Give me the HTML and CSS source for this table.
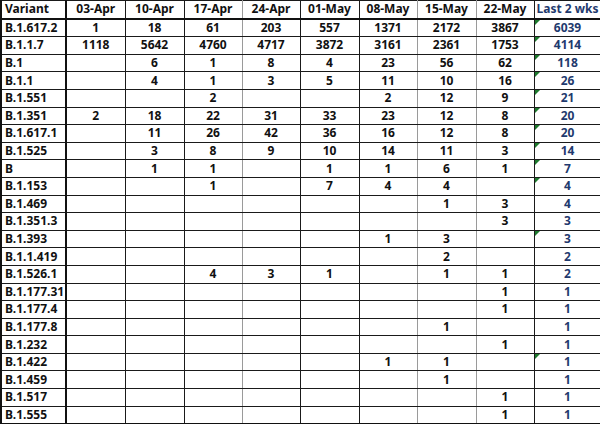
FILE: index.html
```html
<!DOCTYPE html>
<html>
<head>
<meta charset="utf-8">
<link rel="stylesheet" href="styles.css">
</head>
<body>
<table class="grid">
  <colgroup>
    <col class="c-var"><col class="c-a"><col class="c-b"><col class="c-c"><col class="c-d"><col class="c-e"><col class="c-f"><col class="c-g"><col class="c-h"><col class="c-last">
  </colgroup>
  <thead>
    <tr><th class="name">Variant</th><th>03-Apr</th><th>10-Apr</th><th class="g">17-Apr</th><th>24-Apr</th><th>01-May</th><th class="g">08-May</th><th class="g">15-May</th><th>22-May</th><th class="last">Last 2 wks</th></tr>
  </thead>
  <tbody>
    <tr><td class="name">B.1.617.2</td><td>1</td><td>18</td><td class="g">61</td><td>203</td><td>557</td><td class="g">1371</td><td class="g">2172</td><td>3867</td><td class="last flag">6039</td></tr>
    <tr><td class="name">B.1.1.7</td><td>1118</td><td>5642</td><td class="g">4760</td><td>4717</td><td>3872</td><td class="g">3161</td><td class="g">2361</td><td>1753</td><td class="last flag">4114</td></tr>
    <tr><td class="name">B.1</td><td></td><td>6</td><td class="g">1</td><td>8</td><td>4</td><td class="g">23</td><td class="g">56</td><td>62</td><td class="last flag">118</td></tr>
    <tr><td class="name">B.1.1</td><td></td><td>4</td><td class="g">1</td><td>3</td><td>5</td><td class="g">11</td><td class="g">10</td><td>16</td><td class="last flag">26</td></tr>
    <tr><td class="name">B.1.551</td><td></td><td></td><td class="g">2</td><td></td><td></td><td class="g">2</td><td class="g">12</td><td>9</td><td class="last flag">21</td></tr>
    <tr><td class="name">B.1.351</td><td>2</td><td>18</td><td class="g">22</td><td>31</td><td>33</td><td class="g">23</td><td class="g">12</td><td>8</td><td class="last flag">20</td></tr>
    <tr><td class="name">B.1.617.1</td><td></td><td>11</td><td class="g">26</td><td>42</td><td>36</td><td class="g">16</td><td class="g">12</td><td>8</td><td class="last flag">20</td></tr>
    <tr><td class="name">B.1.525</td><td></td><td>3</td><td class="g">8</td><td>9</td><td>10</td><td class="g">14</td><td class="g">11</td><td>3</td><td class="last flag">14</td></tr>
    <tr><td class="name">B</td><td></td><td>1</td><td class="g">1</td><td></td><td>1</td><td class="g">1</td><td class="g">6</td><td>1</td><td class="last flag">7</td></tr>
    <tr><td class="name">B.1.153</td><td></td><td></td><td class="g">1</td><td></td><td>7</td><td class="g">4</td><td class="g">4</td><td></td><td class="last flag">4</td></tr>
    <tr><td class="name">B.1.469</td><td></td><td></td><td class="g"></td><td></td><td></td><td class="g"></td><td class="g">1</td><td>3</td><td class="last">4</td></tr>
    <tr><td class="name">B.1.351.3</td><td></td><td></td><td class="g"></td><td></td><td></td><td class="g"></td><td class="g"></td><td>3</td><td class="last">3</td></tr>
    <tr><td class="name">B.1.393</td><td></td><td></td><td class="g"></td><td></td><td></td><td class="g">1</td><td class="g">3</td><td></td><td class="last flag">3</td></tr>
    <tr><td class="name">B.1.1.419</td><td></td><td></td><td class="g"></td><td></td><td></td><td class="g"></td><td class="g">2</td><td></td><td class="last">2</td></tr>
    <tr><td class="name">B.1.526.1</td><td></td><td></td><td class="g">4</td><td>3</td><td>1</td><td class="g"></td><td class="g">1</td><td>1</td><td class="last">2</td></tr>
    <tr><td class="name">B.1.177.31</td><td></td><td></td><td class="g"></td><td></td><td></td><td class="g"></td><td class="g"></td><td>1</td><td class="last">1</td></tr>
    <tr><td class="name">B.1.177.4</td><td></td><td></td><td class="g"></td><td></td><td></td><td class="g"></td><td class="g"></td><td>1</td><td class="last">1</td></tr>
    <tr><td class="name">B.1.177.8</td><td></td><td></td><td class="g"></td><td></td><td></td><td class="g"></td><td class="g">1</td><td></td><td class="last">1</td></tr>
    <tr><td class="name">B.1.232</td><td></td><td></td><td class="g"></td><td></td><td></td><td class="g"></td><td class="g"></td><td>1</td><td class="last">1</td></tr>
    <tr><td class="name">B.1.422</td><td></td><td></td><td class="g"></td><td></td><td></td><td class="g">1</td><td class="g">1</td><td></td><td class="last flag">1</td></tr>
    <tr><td class="name">B.1.459</td><td></td><td></td><td class="g"></td><td></td><td></td><td class="g"></td><td class="g">1</td><td></td><td class="last">1</td></tr>
    <tr><td class="name">B.1.517</td><td></td><td></td><td class="g"></td><td></td><td></td><td class="g"></td><td class="g"></td><td>1</td><td class="last">1</td></tr>
    <tr><td class="name">B.1.555</td><td></td><td></td><td class="g"></td><td></td><td></td><td class="g"></td><td class="g"></td><td>1</td><td class="last">1</td></tr>
  </tbody>
</table>
</body>
</html>
```
FILE: styles.css
```css
html, body {
  margin: 0;
  padding: 0;
  background: #ffffff;
}

.grid {
  border-collapse: collapse;
  table-layout: fixed;
  width: 600px;
  font-family: "Noto Sans", "Liberation Sans", sans-serif;
  font-weight: 700;
  font-size: 12px;
  color: #111111;
  border-left: 2px solid #111;
  border-bottom: 2px solid #111;
}

.c-var { width: 65px; }
.c-a { width: 59px; }
.c-b { width: 59px; }
.c-c { width: 58px; }
.c-d { width: 58px; }
.c-e { width: 59px; }
.c-f { width: 58px; }
.c-g { width: 59px; }
.c-h { width: 58px; }
.c-last { width: 67px; }

.grid th,
.grid td {
  height: 16.6px;
  padding: 0;
  text-align: center;
  vertical-align: middle;
  border-top: 1px solid #1a1a1a;
  border-bottom: 1px solid #1a1a1a;
  border-right: 1px solid #1a1a1a;
  line-height: 14px;
  white-space: nowrap;
  overflow: hidden;
}

.grid thead th {
  border-bottom: 2px solid #111;
  font-weight: 700;
}

.grid td.g,
.grid th.g {
  border-right-color: #9a9a9a;
}

.grid .name {
  text-align: left;
  padding-left: 3px;
  border-right: 2px solid #111;
}

.grid .last {
  color: #1f3a6e;
  position: relative;
}

.grid td.flag::before {
  content: "";
  position: absolute;
  left: 0;
  top: 0;
  border-top: 5px solid #1e7a2e;
  border-right: 5px solid transparent;
}
```
